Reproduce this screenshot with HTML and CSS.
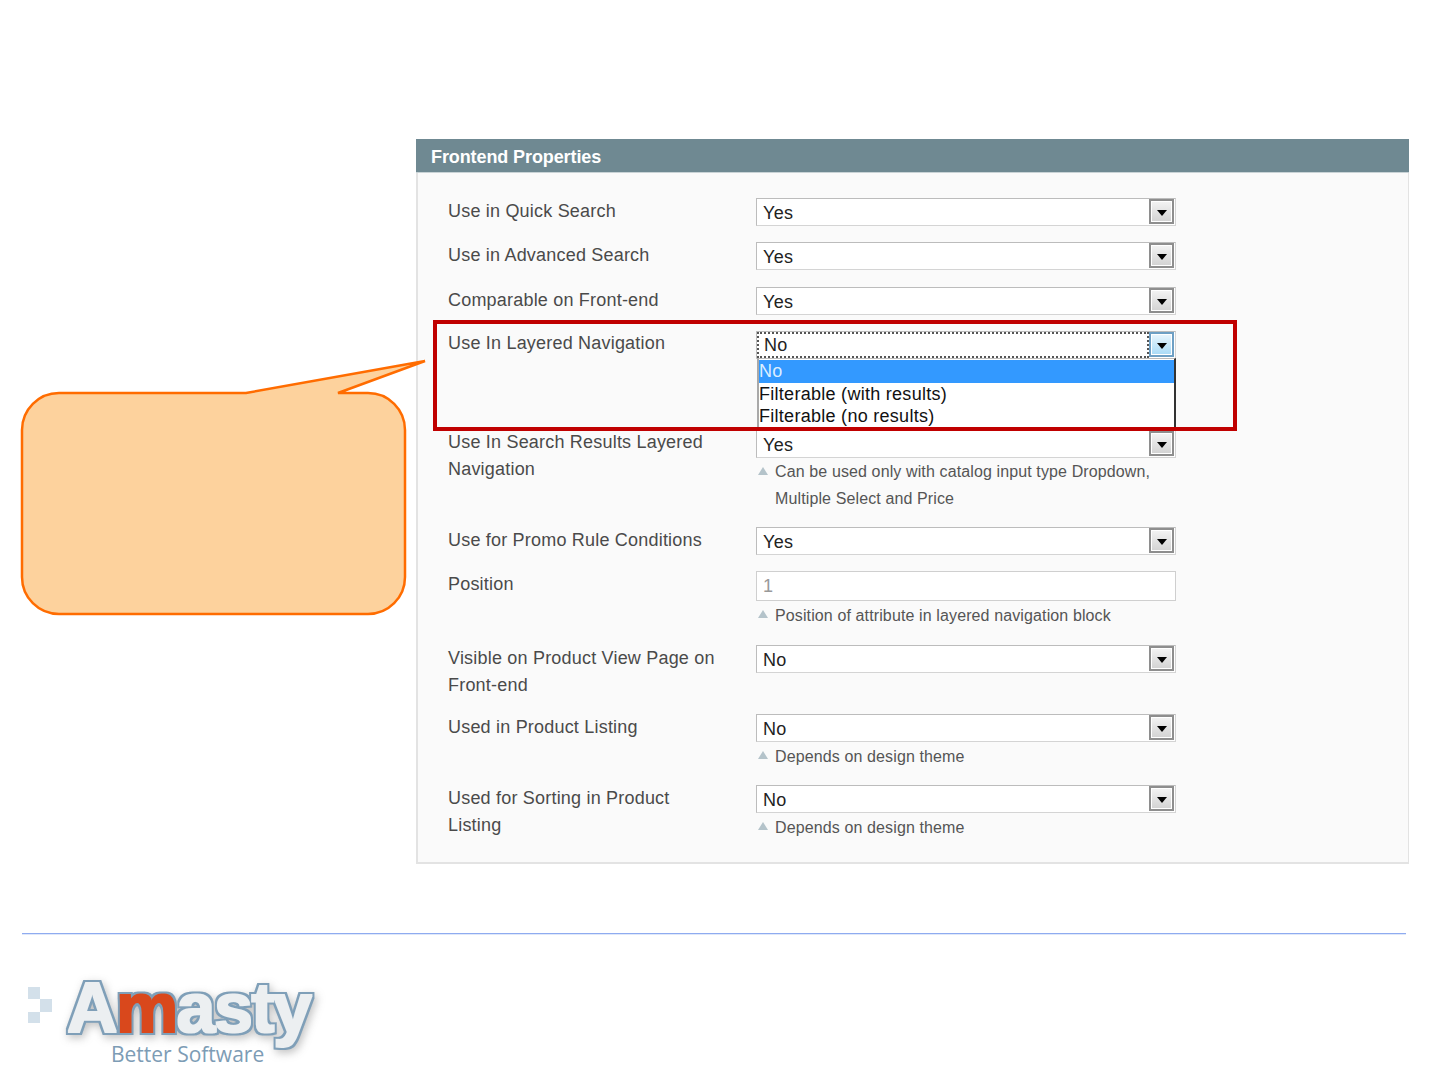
FILE: index.html
```html
<!DOCTYPE html>
<html lang="en">
<head>
<meta charset="utf-8">
<title>Frontend Properties</title>
<link rel="stylesheet" href="styles.css">
</head>
<body>
<main class="stage">
  <section class="panel">
    <h2 class="panel-title">Frontend Properties</h2>
    <div class="panel-body">
      <div class="row">
        <div class="label">Use in Quick Search</div>
        <div class="value"><div class="select"><span class="select-text">Yes</span><span class="select-btn"><i class="arrow"></i></span></div></div>
      </div>
      <div class="row row-wide">
        <div class="label">Use in Advanced Search</div>
        <div class="value"><div class="select"><span class="select-text">Yes</span><span class="select-btn"><i class="arrow"></i></span></div></div>
      </div>
      <div class="row">
        <div class="label">Comparable on Front-end</div>
        <div class="value"><div class="select"><span class="select-text">Yes</span><span class="select-btn"><i class="arrow"></i></span></div></div>
      </div>
      <div class="row row-open">
        <div class="label label-raised">Use In Layered Navigation</div>
        <div class="value">
          <div class="select select-focus"><span class="select-text">No</span><span class="select-btn"><i class="arrow"></i></span></div>
          <ul class="dropdown">
            <li class="option option-active">No</li>
            <li class="option">Filterable (with results)</li>
            <li class="option">Filterable (no results)</li>
          </ul>
        </div>
      </div>
      <div class="row row-hinted">
        <div class="label label-raised">Use In Search Results Layered Navigation</div>
        <div class="value">
          <div class="select"><span class="select-text">Yes</span><span class="select-btn"><i class="arrow"></i></span></div>
          <p class="hint hint-tight">Can be used only with catalog input type Dropdown, Multiple Select and Price</p>
        </div>
      </div>
      <div class="row">
        <div class="label">Use for Promo Rule Conditions</div>
        <div class="value"><div class="select"><span class="select-text">Yes</span><span class="select-btn"><i class="arrow"></i></span></div></div>
      </div>
      <div class="row row-input">
        <div class="label">Position</div>
        <div class="value">
          <div class="input">1</div>
          <p class="hint">Position of attribute in layered navigation block</p>
        </div>
      </div>
      <div class="row row-hinted">
        <div class="label">Visible on Product View Page on Front-end</div>
        <div class="value"><div class="select"><span class="select-text">No</span><span class="select-btn"><i class="arrow"></i></span></div></div>
      </div>
      <div class="row row-hinted">
        <div class="label">Used in Product Listing</div>
        <div class="value">
          <div class="select"><span class="select-text">No</span><span class="select-btn"><i class="arrow"></i></span></div>
          <p class="hint">Depends on design theme</p>
        </div>
      </div>
      <div class="row row-last">
        <div class="label">Used for Sorting in Product Listing</div>
        <div class="value">
          <div class="select"><span class="select-text">No</span><span class="select-btn"><i class="arrow"></i></span></div>
          <p class="hint">Depends on design theme</p>
        </div>
      </div>
    </div>
    <div class="highlight"></div>
  </section>

  <svg class="callout" width="430" height="280" viewBox="0 0 430 280" aria-hidden="true">
    <path class="callout-shape" d="M39 43H226L405 11L318 43H348A37 37 0 0 1 385 80V227A37 37 0 0 1 348 264H39A37 37 0 0 1 2 227V80A37 37 0 0 1 39 43Z"/>
  </svg>

  <div class="divider"></div>

  <footer class="footer">
    <svg class="logo" width="330" height="114" viewBox="0 0 330 114" role="img" aria-label="Amasty Better Software">
      <defs>
        <filter id="logo-outline" x="-10%" y="-30%" width="120%" height="170%" color-interpolation-filters="sRGB">
          <feMorphology in="SourceAlpha" operator="dilate" radius="3.4" result="fatAlpha"/>
          <feGaussianBlur in="fatAlpha" stdDeviation="4" result="blurred"/>
          <feOffset in="blurred" dx="2" dy="3" result="shifted"/>
          <feFlood flood-color="#666" flood-opacity="0.4"/>
          <feComposite in2="shifted" operator="in" result="shadow"/>
          <feFlood flood-color="#7f9fb8"/>
          <feComposite in2="fatAlpha" operator="in" result="outline"/>
          <feMorphology in="SourceGraphic" operator="dilate" radius="1.4" result="fatFill"/>
          <feMerge result="merged">
            <feMergeNode in="shadow"/>
            <feMergeNode in="outline"/>
            <feMergeNode in="fatFill"/>
          </feMerge>
          <feGaussianBlur in="merged" stdDeviation="0.5"/>
        </filter>
      </defs>
      <rect class="logo-square" x="28" y="22" width="12" height="12"/>
      <rect class="logo-square" x="40" y="34" width="12" height="13"/>
      <rect class="logo-square" x="28" y="47" width="12" height="11"/>
      <text class="logo-word" x="67" y="67" filter="url(#logo-outline)">A<tspan class="logo-m">m</tspan>asty</text>
      <text class="logo-tag" x="111" y="97">Better Software</text>
    </svg>
  </footer>
</main>
</body>
</html>
```
FILE: styles.css
```css
* {
  box-sizing: border-box;
}

html,
body {
  margin: 0;
  padding: 0;
  background: #fff;
}

body {
  font-family: "Liberation Sans", Arial, sans-serif;
  color: #444;
}

.stage {
  position: relative;
  width: 1440px;
  height: 1080px;
  overflow: hidden;
  padding-top: 139px;
}

.callout {
  position: absolute;
  left: 20px;
  top: 350px;
}

.callout-shape {
  fill: #fdd29d;
  stroke: #ff6c00;
  stroke-width: 2.5;
  stroke-linejoin: miter;
}

.panel {
  position: relative;
  width: 993px;
  margin-left: 416px;
}

.panel-title {
  margin: 0;
  height: 34px;
  padding-left: 15px;
  background: #6f8992;
  border-bottom: 1px solid #c9d3d6;
  color: #fff;
  font-size: 18px;
  font-weight: bold;
  letter-spacing: -0.1px;
  line-height: 36px;
}

.panel-body {
  padding: 25px 0 0 30px;
  background: #fafafa;
  border: 2px solid #e3e3e3;
  border-top: 0;
  border-right-width: 1px;
  height: 691px;
}

.row {
  display: grid;
  grid-template-columns: 308px 420px;
  padding-bottom: 16px;
}

.row-wide {
  padding-bottom: 17px;
}

.row-open {
  padding-bottom: 71px;
}

.row-hinted {
  padding-bottom: 15px;
}

.row-input {
  padding-bottom: 16px;
}

.row-last {
  padding-bottom: 0;
}

.label {
  font-size: 18px;
  letter-spacing: 0.2px;
  line-height: 27px;
  padding-right: 30px;
  color: #4a4a4a;
}

.label-raised {
  margin-top: -1px;
}

.value {
  position: relative;
  min-width: 0;
}

.select {
  display: flex;
  justify-content: space-between;
  height: 28px;
  padding: 1px 1px 0 0;
  background: #fff;
  border: 1px solid #d4d4d4;
  border-top: 1px solid #bcbcbc;
  border-left: 1px solid #bcbcbc;
}

.select-text {
  padding-left: 6px;
  color: #222;
  font-size: 18px;
  letter-spacing: 0.3px;
  line-height: 26px;
}

.select-btn {
  display: flex;
  align-items: center;
  justify-content: center;
  width: 25px;
  height: 25px;
  margin-top: -1px;
  background: linear-gradient(#f4f4f4, #d2d2d2);
  border: 2px solid #8e8e8e;
  box-shadow: inset 0 0 0 1px #fff;
}

.arrow {
  display: block;
  width: 0;
  height: 0;
  margin-top: 3px;
  border-top: 6px solid #000;
  border-left: 5px solid transparent;
  border-right: 5px solid transparent;
}

.select-focus .select-text {
  flex: 1;
  padding-left: 5px;
  margin: -1px 0 0 0;
  border: 2px dotted #555;
  line-height: 22px;
}

.select-focus .select-btn {
  background: linear-gradient(#eaf6fd, #a7daf7);
  border-color: #6d9fc4;
}

.dropdown {
  position: absolute;
  left: 1px;
  top: 27px;
  width: 419px;
  height: 75px;
  margin: 0;
  padding: 1px 0 0;
  list-style: none;
  background: #fff;
  border-left: 2px solid #a9a9a9;
  border-right: 2px solid #333;
  border-top: 1px solid #bbb;
}

.option {
  height: 22.5px;
  font-size: 18px;
  letter-spacing: 0.28px;
  line-height: 23px;
  color: #111;
}

.option-active {
  background: #3399ff;
  color: #dceeff;
}

.input {
  height: 30px;
  padding-left: 6px;
  background: #fff;
  border: 1px solid #cfcfcf;
  color: #999;
  font-size: 18px;
  line-height: 28px;
}

.hint {
  position: relative;
  margin: 0;
  width: 419px;
  padding: 1px 10px 0 19px;
  color: #555;
  font-size: 16px;
  letter-spacing: 0.12px;
  line-height: 27px;
}

.hint-tight {
  padding-top: 0;
}

.hint::before {
  content: "";
  position: absolute;
  left: 2px;
  top: 9px;
  width: 0;
  height: 0;
  border-bottom: 8px solid #b4c3ca;
  border-left: 5.5px solid transparent;
  border-right: 5.5px solid transparent;
}

.highlight {
  position: absolute;
  left: 17px;
  top: 181px;
  width: 804px;
  height: 111px;
  border: 4px solid #c00000;
  pointer-events: none;
}

.divider {
  height: 1px;
  width: 1384px;
  margin: 69px 0 0 22px;
  background: #8fabf0;
  box-shadow: 0 1px 0 #dfe8fa;
}

.footer {
  padding-top: 31px;
}

.logo {
  display: block;
}

.logo-square {
  fill: #d3e0ea;
}

.logo-word {
  font-family: "Liberation Sans", sans-serif;
  font-size: 70px;
  font-weight: 700;
  letter-spacing: -1.6px;
  fill: #eceff1;
}

.logo-m {
  fill: #d9481c;
}

.logo-tag {
  font-family: "Open Sans", sans-serif;
  font-size: 21px;
  fill: #7d9cb5;
}
```
